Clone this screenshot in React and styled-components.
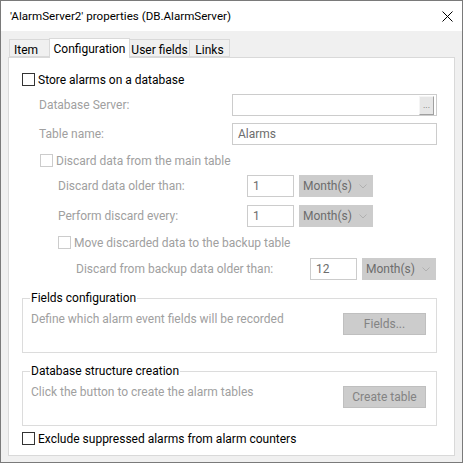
import React from "react";
import styled, { createGlobalStyle } from "styled-components";

const GlobalStyle = createGlobalStyle`
  html, body {
    margin: 0;
    padding: 0;
    background: #ffffff;
  }
  * {
    box-sizing: border-box;
  }
`;

const Window = styled.div`
  width: 463px;
  height: 463px;
  border: 1px solid #7a7a7a;
  background: #f0f0f0;
  display: flex;
  flex-direction: column;
  font-family: Roboto, "Noto Sans", sans-serif;
  font-size: 12px;
  color: #000;
  white-space: nowrap;
`;

const TitleBar = styled.div`
  height: 30px;
  flex: none;
  background: #ffffff;
  display: flex;
  align-items: center;
  justify-content: space-between;
  padding: 0 9px 0 9px;
`;

const Title = styled.span`
  font-size: 11.6px;
  line-height: 16px;
`;

const CloseIcon = styled.svg`
  width: 11px;
  height: 11px;
`;

const Body = styled.div`
  flex: 1;
  display: flex;
  flex-direction: column;
  padding: 7px 7px 6px 7px;
`;

const TabRow = styled.div`
  display: flex;
  align-items: flex-end;
  height: 19px;
  padding-left: 1px;
  position: relative;
  z-index: 1;
`;

const Tab = styled.div`
  width: ${({ $w }) => $w}px;
  height: ${({ $active }) => ($active ? 20 : 18)}px;
  margin-left: -1px;
  margin-bottom: ${({ $active }) => ($active ? -1 : 0)}px;
  border: 1px solid #d9d9d9;
  border-bottom: ${({ $active }) => ($active ? "none" : "1px solid #d9d9d9")};
  background: ${({ $active }) => ($active ? "#ffffff" : "#f0f0f0")};
  text-align: ${({ $left }) => ($left ? "left" : "center")};
  padding-left: ${({ $left }) => ($left ? 4 : 0)}px;
  line-height: 16px;
  padding-top: ${({ $active }) => ($active ? 2 : 2)}px;
  position: relative;
  z-index: ${({ $active }) => ($active ? 2 : 1)};
  &:first-child {
    margin-left: 0;
  }
`;

const Panel = styled.div`
  flex: 1;
  background: #ffffff;
  border: 1px solid #d9d9d9;
  padding: 15px 17px 0 13px;
  display: flex;
  flex-direction: column;
`;

const CheckRow = styled.label`
  display: flex;
  align-items: center;
  height: 13px;
  margin-top: ${({ $mt }) => $mt || 0}px;
  padding-left: ${({ $indent }) => $indent || 0}px;
  color: ${({ $disabled }) => ($disabled ? "#a0a0a0" : "#000")};
  line-height: 16px;
`;

const Box = styled.span`
  width: 13px;
  height: 13px;
  flex: none;
  border: 1px solid ${({ $disabled }) => ($disabled ? "#cccccc" : "#333333")};
  background: #ffffff;
  margin-right: 3px;
`;

const FieldRow = styled.div`
  display: flex;
  align-items: center;
  height: 22px;
  margin-top: ${({ $mt }) => $mt || 0}px;
  padding-left: ${({ $indent }) => $indent || 0}px;
`;

const Label = styled.span`
  width: ${({ $w }) => $w}px;
  flex: none;
  color: #a0a0a0;
  line-height: 16px;
`;

const TextBox = styled.div`
  width: ${({ $w }) => $w}px;
  height: 22px;
  flex: none;
  border: 1px solid #cccccc;
  background: #ffffff;
  color: #6d6d6d;
  padding: ${({ $end }) => ($end ? "0 2px 0 0" : "0 5px")};
  display: flex;
  align-items: center;
  justify-content: ${({ $end }) => ($end ? "flex-end" : "flex-start")};
  line-height: 16px;
`;

const BrowseButton = styled.div`
  width: 15px;
  height: 19px;
  background: #e6e6e6;
  border-top: 1px solid #f5f5f5;
  border-left: 1px solid #f5f5f5;
  border-right: 1px solid #a0a0a0;
  border-bottom: 1px solid #a0a0a0;
  color: #6d6d6d;
  font-size: 9px;
  line-height: 17px;
  text-align: center;
`;

const Combo = styled.div`
  width: 74px;
  height: 22px;
  flex: none;
  margin-left: 5px;
  background: #cccccc;
  border: 1px solid #cccccc;
  color: #6d6d6d;
  display: flex;
  align-items: center;
  justify-content: space-between;
  padding: 0 5px 0 3px;
  line-height: 16px;
`;

const Chevron = styled.svg`
  width: 8px;
  height: 5px;
`;

const Group = styled.fieldset`
  margin: ${({ $mt }) => $mt || 0}px 0 0 0;
  padding: 0 10px 0 7px;
  border: 1px solid #dcdcdc;
  height: 63px;
  min-width: 0;
`;

const Legend = styled.legend`
  padding: 0 1px;
  line-height: 16px;
  color: #000;
`;

const GroupContent = styled.div`
  display: flex;
  justify-content: space-between;
  align-items: flex-start;
  margin-top: 5px;
`;

const Description = styled.span`
  color: #a0a0a0;
  line-height: 16px;
  padding-left: 1px;
`;

const Button = styled.div`
  width: 83px;
  height: 22px;
  margin-top: 2px;
  background: #cccccc;
  border: 1px solid #bfbfbf;
  color: #838383;
  text-align: center;
  line-height: 20px;
`;

const Select = ({ value }) => (
  <Combo>
    <span>{value}</span>
    <Chevron viewBox="0 0 8 5">
      <path d="M0.5 0.5 L4 4 L7.5 0.5" fill="none" stroke="#b0b0b0" strokeWidth="1" />
    </Chevron>
  </Combo>
);

const Check = ({ children, disabled, indent, mt }) => (
  <CheckRow $disabled={disabled} $indent={indent} $mt={mt}>
    <Box $disabled={disabled} />
    {children}
  </CheckRow>
);

export default function App() {
  return (
    <>
      <GlobalStyle />
      <Window>
        <TitleBar>
          <Title>'AlarmServer2' properties (DB.AlarmServer)</Title>
          <CloseIcon viewBox="0 0 11 11">
            <path d="M0.5 0.5 L10.5 10.5 M10.5 0.5 L0.5 10.5" stroke="#000" strokeWidth="1" />
          </CloseIcon>
        </TitleBar>
        <Body>
          <TabRow>
            <Tab $w={41} $left>Item</Tab>
            <Tab $w={81} $active>Configuration</Tab>
            <Tab $w={61}>User fields</Tab>
            <Tab $w={41}>Links</Tab>
          </TabRow>
          <Panel>
            <Check>Store alarms on a database</Check>

            <FieldRow $mt={8} $indent={17}>
              <Label $w={193}>Database Server:</Label>
              <TextBox $w={205} $end>
                <BrowseButton>...</BrowseButton>
              </TextBox>
            </FieldRow>
            <FieldRow $mt={7} $indent={17}>
              <Label $w={193}>Table name:</Label>
              <TextBox $w={205}>Alarms</TextBox>
            </FieldRow>

            <Check disabled indent={18} mt={9}>Discard data from the main table</Check>

            <FieldRow $mt={8} $indent={36}>
              <Label $w={189}>Discard data older than:</Label>
              <TextBox $w={47}>1</TextBox>
              <Select value="Month(s)" />
            </FieldRow>
            <FieldRow $mt={8} $indent={36}>
              <Label $w={189}>Perform discard every:</Label>
              <TextBox $w={47}>1</TextBox>
              <Select value="Month(s)" />
            </FieldRow>

            <Check disabled indent={36} mt={9}>Move discarded data to the backup table</Check>

            <FieldRow $mt={9} $indent={54}>
              <Label $w={234}>Discard from backup data older than:</Label>
              <TextBox $w={47}>12</TextBox>
              <Select value="Month(s)" />
            </FieldRow>

            <Group $mt={10}>
              <Legend>Fields configuration</Legend>
              <GroupContent>
                <Description>Define which alarm event fields will be recorded</Description>
                <Button>Fields...</Button>
              </GroupContent>
            </Group>

            <Group $mt={10}>
              <Legend>Database structure creation</Legend>
              <GroupContent>
                <Description>Click the button to create the alarm tables</Description>
                <Button>Create table</Button>
              </GroupContent>
            </Group>

            <Check mt={6}>Exclude suppressed alarms from alarm counters</Check>
          </Panel>
        </Body>
      </Window>
    </>
  );
}
